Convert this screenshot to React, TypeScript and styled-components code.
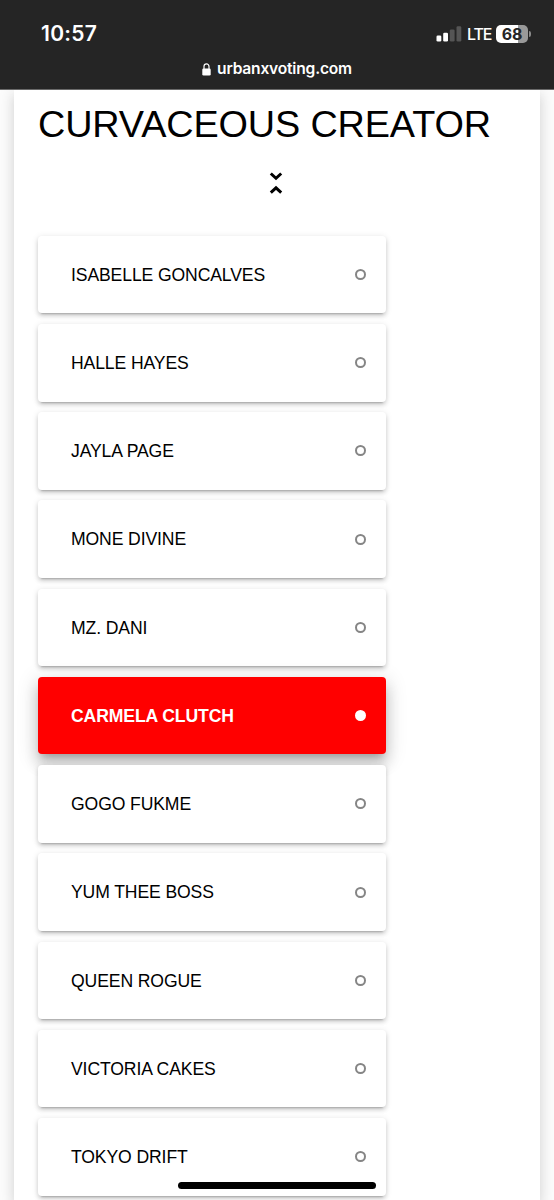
import React, { useState } from "react";
import styled, { createGlobalStyle, css } from "styled-components";

const GlobalStyle = createGlobalStyle`
  * { box-sizing: border-box; }
  html, body { margin: 0; height: 100%; overflow: hidden; background: #fafafa; }
`;

const Screen = styled.div`
  display: flex;
  flex-direction: column;
  width: 554px;
  height: 1200px;
  overflow: hidden;
  background: #fcfcfc;
  font-family: "Liberation Sans", Arial, sans-serif;
  color: #000;
`;

const BrowserBar = styled.header`
  position: relative;
  z-index: 1;
  flex: none;
  height: 90px;
  background: #252525;
  border-bottom: 1px solid #6a6a6a;
  color: #fff;
  font-family: Inter, sans-serif;
`;

const StatusRow = styled.div`
  display: flex;
  align-items: center;
  justify-content: space-between;
  height: 58px;
  padding: 9px 23px 0 41px;
`;

const Clock = styled.span`
  font-size: 21px;
  font-weight: 600;
  letter-spacing: 0.25px;
`;

const Indicators = styled.div`
  display: flex;
  align-items: center;
`;

const Network = styled.span`
  display: inline-block;
  width: 24px;
  margin: 0 5px 0 5px;
  font-size: 16px;
  font-weight: 500;
  letter-spacing: -1.1px;
  line-height: 20px;
`;

const BatteryBody = styled.div`
  display: flex;
  align-items: center;
  justify-content: center;
  width: 32px;
  height: 18px;
  border-radius: 5px;
  background: linear-gradient(to right, #fff 69%, #999 69%);
  color: #252525;
  font-size: 16px;
  font-weight: 700;
  letter-spacing: -0.2px;
`;

const BatteryCap = styled.div`
  width: 2px;
  height: 6px;
  margin-left: 1px;
  border-radius: 0 2px 2px 0;
  background: #8a8a8a;
`;

const AddressRow = styled.div`
  display: flex;
  align-items: center;
  justify-content: center;
  gap: 6px;
  height: 22px;
`;

const Address = styled.span`
  font-size: 15.6px;
  font-weight: 600;
  letter-spacing: -0.2px;
  line-height: 22px;
`;

const Sheet = styled.main`
  flex: 1;
  width: 526px;
  margin: 0 auto 0 14px;
  padding: 11px 24px 0;
  background: #fff;
  box-shadow: 0 3px 14px 2px rgba(0, 0, 0, 0.11), 0 8px 10px 0 rgba(0, 0, 0, 0.06);
`;

const Title = styled.h1`
  margin: 0 0 1px;
  font-size: 37.8px;
  font-weight: 400;
  letter-spacing: -0.12px;
  line-height: 46px;
  white-space: nowrap;
`;

const CollapseButton = styled.button`
  display: flex;
  justify-content: center;
  width: 100%;
  height: 87.7px;
  padding: 22px 2px 0 0;
  border: 0;
  background: none;
`;

const Options = styled.div`
  display: flex;
  flex-direction: column;
  gap: 10.65px;
  width: 348px;
`;

const Option = styled.div<{ $selected: boolean }>`
  display: flex;
  align-items: center;
  justify-content: space-between;
  height: 77.6px;
  padding: 0 20px 0 33px;
  border-radius: 4px;
  background: #fff;
  box-shadow: 0 4px 2px -3px rgba(0, 0, 0, 0.2), 0 3px 4px 0 rgba(0, 0, 0, 0.14),
    0 1px 7px 0 rgba(0, 0, 0, 0.11);
  font-size: 17.6px;
  letter-spacing: -0.12px;
  cursor: pointer;
  ${(p) =>
    p.$selected &&
    css`
      background: #f00;
      color: #fff;
      font-weight: 700;
      box-shadow: 0 7px 7px -4px rgba(0, 0, 0, 0.2), 0 11px 14px 1px rgba(0, 0, 0, 0.14),
        0 4px 20px 3px rgba(0, 0, 0, 0.12);
    `}
`;

const OptionName = styled.span`
  padding-top: 1.6px;
`;

const Radio = styled.span<{ $selected: boolean }>`
  width: 11px;
  height: 11px;
  border: 2px solid ${(p) => (p.$selected ? "#fff" : "#858585")};
  border-radius: 50%;
  background: #fff;
`;

const HomeIndicator = styled.div`
  position: absolute;
  left: 178px;
  top: 1182px;
  width: 198px;
  height: 7px;
  border-radius: 4px;
  background: #000;
`;

const names = [
  "ISABELLE GONCALVES",
  "HALLE HAYES",
  "JAYLA PAGE",
  "MONE DIVINE",
  "MZ. DANI",
  "CARMELA CLUTCH",
  "GOGO FUKME",
  "YUM THEE BOSS",
  "QUEEN ROGUE",
  "VICTORIA CAKES",
  "TOKYO DRIFT",
];

const SignalIcon = () => (
  <svg width="26" height="16" viewBox="0 0 26 16">
    <rect x="0.5" y="9.5" width="4.8" height="6" rx="1.3" fill="#fff" />
    <rect x="7.2" y="6.7" width="4.8" height="8.8" rx="1.3" fill="#fff" />
    <rect x="13.8" y="3.5" width="4.8" height="12" rx="1.3" fill="#555" />
    <rect x="20.5" y="0.3" width="4.8" height="15.2" rx="1.3" fill="#555" />
  </svg>
);

const LockIcon = () => (
  <svg width="9" height="13" viewBox="0 0 9 13">
    <path d="M2 6V3.5a2.5 2.7 0 0 1 5 0V6" fill="none" stroke="#fff" strokeWidth="1.2" />
    <rect x="0.3" y="5.5" width="8.4" height="7" rx="1.3" fill="#fff" />
  </svg>
);

const CollapseIcon = () => (
  <svg width="14" height="26" viewBox="0 0 14 26" fill="none" stroke="#000" strokeWidth="3">
    <path d="M1.8 3.5 7 8.3 12.2 3.5M1.8 22.7 7 17.9 12.2 22.7" />
  </svg>
);

export default function App() {
  const [choice, setChoice] = useState("CARMELA CLUTCH");
  return (
    <Screen>
      <GlobalStyle />
      <BrowserBar>
        <StatusRow>
          <Clock>10:57</Clock>
          <Indicators>
            <SignalIcon />
            <Network>LTE</Network>
            <BatteryBody>68</BatteryBody>
            <BatteryCap />
          </Indicators>
        </StatusRow>
        <AddressRow>
          <LockIcon />
          <Address>urbanxvoting.com</Address>
        </AddressRow>
      </BrowserBar>
      <Sheet>
        <Title>CURVACEOUS CREATOR</Title>
        <CollapseButton aria-label="Collapse">
          <CollapseIcon />
        </CollapseButton>
        <Options role="radiogroup">
          {names.map((name) => (
            <Option
              key={name}
              role="radio"
              aria-checked={name === choice}
              $selected={name === choice}
              onClick={() => setChoice(name)}
            >
              <OptionName>{name}</OptionName>
              <Radio $selected={name === choice} />
            </Option>
          ))}
        </Options>
      </Sheet>
      <HomeIndicator />
    </Screen>
  );
}
